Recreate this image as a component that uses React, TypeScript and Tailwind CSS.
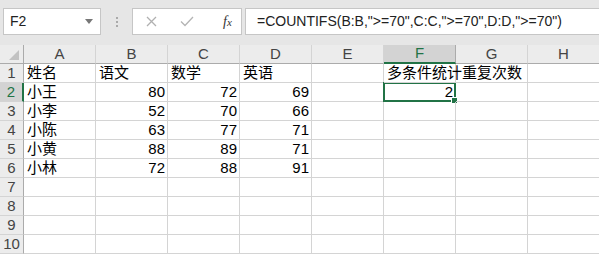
import React from 'react';

const cols = ['A', 'B', 'C', 'D', 'E', 'F', 'G', 'H'];

// row data: [A, B, C, D, E, F]
const rows: (string | number | null)[][] = [
  ['姓名', '语文', '数学', '英语', null, '多条件统计重复次数'],
  ['小王', 80, 72, 69, null, 2],
  ['小李', 52, 70, 66],
  ['小陈', 63, 77, 71],
  ['小黄', 88, 89, 71],
  ['小林', 72, 88, 91],
  [],
  [],
  [],
  [],
];

const font = "font-['Liberation_Sans','Noto_Sans_CJK_SC',sans-serif]";

function FormulaBar() {
  return (
    <div className="h-[45px] bg-[#e6e6e6] pt-[8px] flex items-start">
      <div className="ml-[3px] w-[98px] h-[27px] bg-white border border-[#c6c6c6] flex items-center justify-between pl-[6px] pr-[7px]">
        <span className="text-[14px] text-[#222]">F2</span>
        <svg width="8" height="5" viewBox="0 0 8 5">
          <path d="M0 0 L8 0 L4 5 Z" fill="#777" />
        </svg>
      </div>
      <div className="w-[31px] h-[27px] flex flex-col items-center justify-center gap-[2px]">
        <span className="w-[2px] h-[2px] bg-[#aaa]" />
        <span className="w-[2px] h-[2px] bg-[#aaa]" />
        <span className="w-[2px] h-[2px] bg-[#aaa]" />
      </div>
      <div className="w-[110px] h-[27px] bg-white border border-[#c6c6c6] flex items-center pl-[13px]">
        <svg width="11" height="11" viewBox="0 0 11 11">
          <path d="M1 1 L10 10 M10 1 L1 10" stroke="#b0b0b0" strokeWidth="1.3" />
        </svg>
        <svg className="ml-[23px]" width="14" height="11" viewBox="0 0 14 11">
          <path d="M1 5.5 L5 9.5 L13 1" stroke="#b4b4b4" strokeWidth="1.3" fill="none" />
        </svg>
        <span className="ml-[29px] font-['Liberation_Serif',serif] italic text-[14px] text-[#333] leading-none">
          f<span className="text-[11px]">x</span>
        </span>
      </div>
      <div className="ml-[3px] flex-1 h-[27px] bg-white border border-r-0 border-[#c6c6c6] flex items-center pl-[11px]">
        <span className="text-[14px] text-[#222] whitespace-nowrap">
          =COUNTIFS(B:B,"&gt;=70",C:C,"&gt;=70",D:D,"&gt;=70")
        </span>
      </div>
    </div>
  );
}

export default function App() {
  return (
    <div className={`w-[599px] h-[254px] overflow-hidden bg-white ${font}`}>
      <FormulaBar />
      <div className="grid grid-cols-[24px_repeat(8,72px)] grid-rows-[repeat(11,19px)] w-[600px]">
        {/* header row */}
        <div className="bg-[#ececec] border-r border-b border-[#ababab] flex items-end justify-end pr-[4px] pb-[3px]">
          <svg width="10" height="10" viewBox="0 0 10 10">
            <path d="M10 0 L10 10 L0 10 Z" fill="#c2c2c2" />
          </svg>
        </div>
        {cols.map((c) => (
          <div
            key={c}
            className={
              c === 'F'
                ? 'bg-[#d3d3d3] border-r border-[#ababab] border-b-2 border-b-[#217346] text-[#217346] flex items-center justify-center text-[15px]'
                : 'bg-[#ececec] border-r border-b border-[#d4d4d4] border-b-[#ababab] text-[#444] flex items-center justify-center text-[15px]'
            }
          >
            {c}
          </div>
        ))}
        {rows.map((r, i) => (
          <React.Fragment key={i}>
            <div
              className={
                i === 1
                  ? 'bg-[#d3d3d3] border-r-2 border-r-[#217346] border-b border-[#d4d4d4] text-[#217346] flex items-center justify-center text-[15px]'
                  : 'bg-[#ececec] border-r border-r-[#ababab] border-b border-[#d4d4d4] text-[#444] flex items-center justify-center text-[15px]'
              }
            >
              {i + 1}
            </div>
            {cols.map((c, j) => {
              const v = r[j];
              const isNum = typeof v === 'number';
              const isSel = i === 1 && c === 'F';
              return (
                <div
                  key={c}
                  className={`relative border-r border-b border-[#d4d4d4] flex items-center text-[15px] text-black whitespace-nowrap ${
                    isNum ? 'justify-end pr-[2px] text-[14px]' : 'pl-[3px]'
                  } ${i === 0 && c === 'F' ? 'overflow-visible z-10' : ''}`}
                >
                  {v !== undefined && v !== null && <span>{v}</span>}
                  {isSel && (
                    <>
                      <div className="absolute -left-[1px] -top-[1px] -right-[1px] -bottom-[1px] border-2 border-[#217346]" />
                      <div className="absolute -right-[3px] -bottom-[3px] w-[5px] h-[5px] bg-[#217346] border border-white box-content" />
                    </>
                  )}
                </div>
              );
            })}
          </React.Fragment>
        ))}
      </div>
    </div>
  );
}
